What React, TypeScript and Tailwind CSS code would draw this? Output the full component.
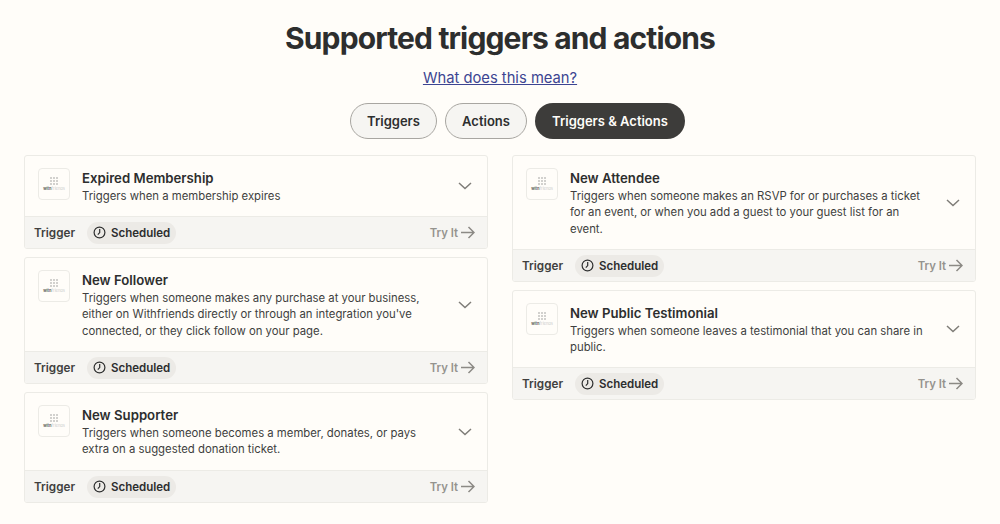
type Item = { title: string; lines: string[]; pad: string };

const leftItems: Item[] = [
  { title: "Expired Membership", lines: ["Triggers when a membership expires"], pad: "h-[60px]" },
  {
    title: "New Follower",
    lines: [
      "Triggers when someone makes any purchase at your business,",
      "either on Withfriends directly or through an integration you've",
      "connected, or they click follow on your page.",
    ],
    pad: "h-[93px]",
  },
  {
    title: "New Supporter",
    lines: [
      "Triggers when someone becomes a member, donates, or pays",
      "extra on a suggested donation ticket.",
    ],
    pad: "h-[77px]",
  },
];

const rightItems: Item[] = [
  {
    title: "New Attendee",
    lines: [
      "Triggers when someone makes an RSVP for or purchases a ticket",
      "for an event, or when you add a guest to your guest list for an",
      "event.",
    ],
    pad: "h-[93px]",
  },
  {
    title: "New Public Testimonial",
    lines: ["Triggers when someone leaves a testimonial that you can share in", "public."],
    pad: "h-[76px]",
  },
];

function Logo() {
  return (
    <div className="w-[32px] h-[32px] shrink-0 rounded-[4px] border border-[#ecebe6] bg-[#fffdf9] flex flex-col items-center justify-center">
      <div className="grid grid-cols-3 gap-[1px]">
        {Array.from({ length: 9 }).map((_, i) => (
          <div key={i} className="w-[2px] h-[2px] bg-[#d2d1ce]" />
        ))}
      </div>
      <div className="text-[4px] leading-[5px] mt-[1px] font-bold text-[#666] whitespace-nowrap">
        with<span className="text-[#ccc] font-normal">friends</span>
      </div>
    </div>
  );
}

function ArrowRight() {
  return (
    <svg width="14" height="13" viewBox="0 0 14 13" fill="none" stroke="#8c8a85" strokeWidth="1.5">
      <path d="M0 6.5h13M7.5 1L13 6.5 7.5 12" />
    </svg>
  );
}

function Chevron() {
  return (
    <svg width="14" height="8" viewBox="0 0 14 8" fill="none" stroke="#7f7d78" strokeWidth="1.5" className="shrink-0">
      <path d="M1 1l6 5.5L13 1" />
    </svg>
  );
}

function ClockIcon() {
  return (
    <svg width="13" height="13" viewBox="0 0 13 13" fill="none" stroke="#2d2e2e" strokeWidth="1.2">
      <circle cx="6.5" cy="6.5" r="5.4" />
      <path d="M6.7 3v3.6L4.8 8.6" />
    </svg>
  );
}

function Card({ item }: { item: Item }) {
  return (
    <div className="rounded-[3px] border border-[#ecebe6] bg-[#fffdf9] overflow-hidden">
      <div className={`${item.pad} flex items-center pl-[13px] pr-[15px]`}>
        <div className="flex flex-1 min-w-0 gap-[12px] self-start pt-[12px]">
          <Logo />
          <div>
            <div className="text-[13.2px] leading-[20px] font-semibold text-[#2d2e2e]">{item.title}</div>
            <div className="text-[11.33px] leading-[16.3px] text-[#403f3e]">
              {item.lines.map((l) => (
                <div key={l} className="whitespace-nowrap">
                  {l}
                </div>
              ))}
            </div>
          </div>
        </div>
        <Chevron />
      </div>
      <div className="h-[32px] border-t border-[#ecebe6] bg-[#f6f5f2] flex items-center pl-[9px] pr-[12px]">
        <span className="pt-[2px] text-[11.7px] font-semibold text-[#403f3e] w-[53px]">Trigger</span>
        <span className="h-[22px] rounded-full bg-[#eceae6] flex items-center gap-[5px] pl-[6px] pr-[6px] text-[11.5px] font-semibold text-[#2d2e2e]">
          <ClockIcon />
          <span className="pt-[2px]">Scheduled</span>
        </span>
        <span className="ml-auto flex items-center gap-[3px] text-[11.3px] font-semibold text-[#95938e]">
          <span className="pt-[2px]">Try It</span>
          <ArrowRight />
        </span>
      </div>
    </div>
  );
}

export default function App() {
  return (
    <div className="h-[524px] overflow-hidden bg-[#fffdf9] font-['Inter',sans-serif] px-[24px]">
      <h1 className="pt-[19px] text-center text-[30px] leading-[38px] font-bold tracking-[-0.85px] text-[#2d2e2e]">
        Supported triggers and actions
      </h1>
      <div className="mt-[9px] text-center text-[14.75px] leading-[24px]">
        <a href="#" className="text-[#3d4592] underline">
          What does this mean?
        </a>
      </div>
      <div className="mt-[13px] flex justify-center gap-[8px] pl-[35px]">
        <button className="h-[36px] w-[87px] pt-[1px] rounded-full border border-[#a8a6a1] bg-[#f6f5f2] text-[13px] font-semibold text-[#2d2e2e]">
          Triggers
        </button>
        <button className="h-[36px] w-[82px] pt-[1px] rounded-full border border-[#a8a6a1] bg-[#f6f5f2] text-[13px] font-semibold text-[#2d2e2e]">
          Actions
        </button>
        <button className="h-[36px] w-[150px] pt-[1px] rounded-full bg-[#3d3c3a] text-[13px] font-semibold text-[#fffdf9]">
          Triggers &amp; Actions
        </button>
      </div>
      <div className="mt-[16px] grid grid-cols-2 gap-x-[24px] items-start">
        <div className="flex flex-col gap-[8px]">
          {leftItems.map((item) => (
            <Card key={item.title} item={item} />
          ))}
        </div>
        <div className="flex flex-col gap-[8px]">
          {rightItems.map((item) => (
            <Card key={item.title} item={item} />
          ))}
        </div>
      </div>
    </div>
  );
}
